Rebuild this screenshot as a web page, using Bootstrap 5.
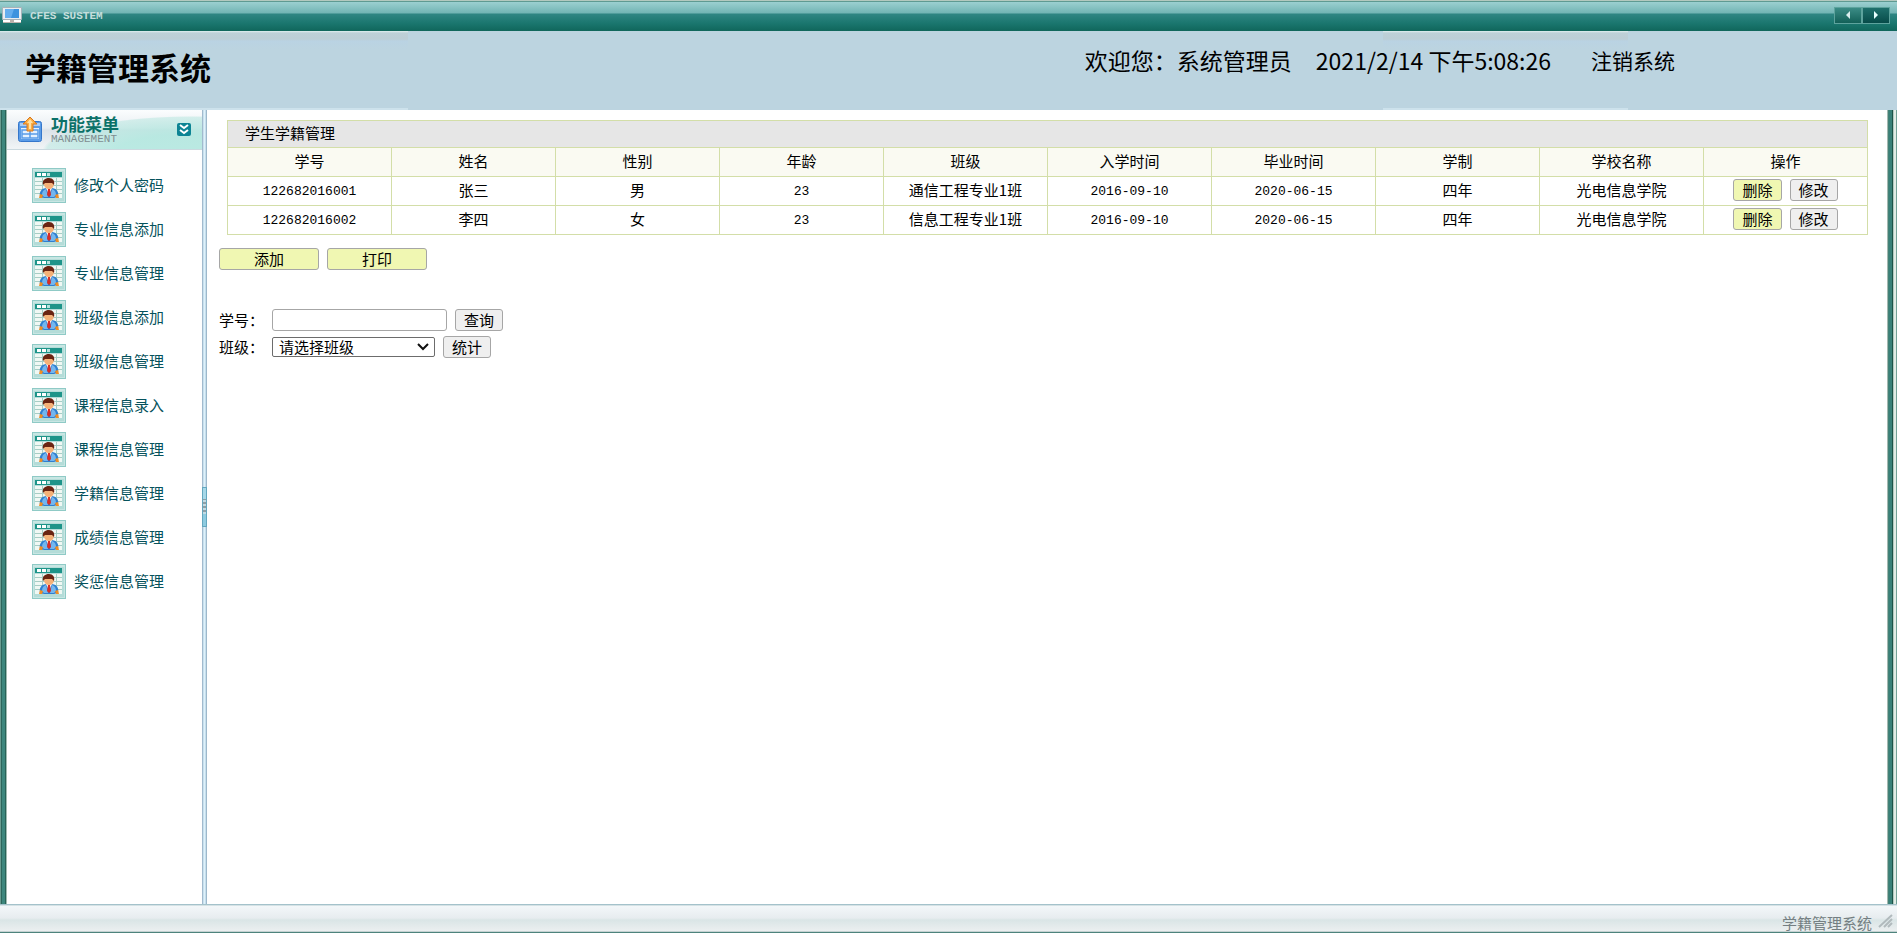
<!DOCTYPE html>
<html lang="zh-CN">
<head>
<meta charset="utf-8">
<meta name="viewport" content="width=device-width, initial-scale=1">
<title>学籍管理系统</title>
<link href="https://cdn.jsdelivr.net/npm/bootstrap@5.3.0/dist/css/bootstrap.min.css" rel="stylesheet">
<style>
body{font-family:"Noto Sans CJK SC",sans-serif;font-size:15px;line-height:20px;color:#000;background:#fff}
.titlebar{height:31px;padding:0 7px 2px 2px;border-top:1px solid #b3c9bf;box-shadow:inset 0 1px 0 #5f9a92;background:linear-gradient(#9fd2d3 0,#72b4b4 12px,#2f8583 13px,#1b776f 22px,#0e6459 31px)}
.sysname{font:700 11px/14px "Liberation Mono",monospace;color:#c5dedc;padding-top:2px}
.navbtn{width:28px;height:17px;padding:0;border:1px solid #5da39d;background:linear-gradient(#3b8c86,#136058);display:flex;align-items:center;justify-content:center}
.navbtn:last-child{background:linear-gradient(#1f706c,#074b49)}
.banner{height:79px;background:linear-gradient(#e0efef,#bdd0d7 2px,#bcced6 8px,#bad3e3 10px,#bcd4e0 18px,#bcd4e0 77px,#cde2ec 77px) 0 0/408px 79px no-repeat,linear-gradient(#e0efef,#bdd0d7 2px,#bcced6 8px,#bad3e3 10px,#bcd4e0 18px,#bcd4e0 77px,#cde2ec 77px) 1383px 0/245px 79px no-repeat,#bcd4e0;padding:0 222px 0 25px}
.sitetitle{font-size:31px;line-height:38px;font-weight:700;margin:0;padding-top:17px}
.userinfo{font-size:23px;line-height:30px;padding-top:14px;gap:24px}
.userinfo a{font-size:21px;color:#000;text-decoration:none;margin-left:16px}
.edge-l{flex:0 0 7px;background:linear-gradient(90deg,#6b9c90 0 1px,#2d665c 1px 2px,#3d877d 2px 5px,#286257 5px 6px,#9fbcb1 6px)}
.edge-r{flex:0 0 10px;background:linear-gradient(90deg,#a3b9b0 0 1px,#448177 1px 2px,#398178 2px 5px,#1d5348 5px 6px,#b1cabf 6px 7px,#e1ece6 7px 9px,#74a297 9px)}
.sidebar{flex:0 0 195px}
.side-head{height:40px;padding:0 11px 0 10px;border-bottom:1px solid #cbd9df;background:radial-gradient(ellipse 150px 36px at 185px 42px,rgba(180,232,224,.9) 0 50%,rgba(190,232,226,.6) 97%,transparent 100%),linear-gradient(#fbfdfe 0,#e9eef2 18px,#dce2e8 20px,#f0f4f6 38px)}
.side-title{font-size:17px;line-height:19px;font-weight:700;color:#0b7168}
.side-sub{font:11px/13px "Liberation Mono",monospace;color:#7f8e91}
.fold{width:14px;height:13px;padding:0;border:0;background:none;display:flex}
.menu-list{padding:18px 0 0 25px;margin:0;list-style:none;display:grid;gap:10px}
.menu-list a{display:flex;align-items:center;gap:8px;height:34px;color:#05525c;text-decoration:none}
.splitter{flex:0 0 5px;background:linear-gradient(90deg,#a1bace 0 1px,#c9e1ee 1px 2px,#dff1fa 2px 3px,#c6dfed 3px 4px,#9db8cb 4px)}
.grip{height:40px;width:5px;border:1px solid #64a7bf;background:linear-gradient(#a7d8e8 11px,transparent 11px 26px,#8ecbe0 26px),repeating-linear-gradient(#c3dbe4 0 2px,#8f9fa6 2px 4px)}
.main-pane{padding:10px 19px 0 20px}
.roster{width:100%;table-layout:fixed;border-collapse:collapse;text-align:center}
.roster th,.roster td{border:1px solid #d3dea8;padding:0 0 2px;height:29px;font-weight:400}
.roster .caption-row th{height:27px;background:#e6e6e6;text-align:left;padding-left:17px}
.roster .head-row th{background:#fafaf2}
.roster .num{font-family:"Liberation Mono",monospace;font-size:13px;padding:2px 0 0}
.ctl{height:22px;font-size:15px;line-height:18px;padding:0 8px;border:1px solid #a6a6a6;border-radius:3px;background:#efefef;color:#000}
.ctl-y{background:#f0f7b2}
.ctl-wide{width:100px}
.tools{margin:13px 0 0 -8px}
.query-area{margin:39px 0 0 -8px;display:grid;gap:5px}
.query-area label{width:53px}
.txt{width:175px;height:22px;border:1px solid #a6a6a6;border-radius:3px;padding:0 4px}
.sel{appearance:none;width:163px;height:20px;border:1px solid #6c6c6c;border-radius:2px;background:#fff url("data:image/svg+xml,%3Csvg xmlns='http://www.w3.org/2000/svg' width='12' height='8'%3E%3Cpath d='M1 1l5 5 5-5' fill='none' stroke='%23111' stroke-width='2'/%3E%3C/svg%3E") right 5px center no-repeat;color:#000;font-size:15px;line-height:18px;padding:0 20px 0 6px}
.statusbar{height:29px;border-top:1px solid #a4c2cb;border-bottom:1px solid #4d837c;box-shadow:inset 0 1px 0 #d5e2e5,inset 0 -1px 0 #c5d2d2;background:linear-gradient(#f4f8fa,#e7ecef 13px,#dae5e6 15px,#edf0f1 27px);color:#747f82;padding:8px 4px 0 0;gap:6px}
</style>
</head>
<body class="d-flex flex-column min-vh-100">
<svg class="d-none">
 <symbol id="student" viewBox="0 0 34 35">
  <path fill="#8fcac6" d="M0 0h34v35H0z"/><path fill="#c8e6e3" d="M1 1h32v33H1z"/><path fill="#b4dcd8" d="M2 3h30v30H2z"/>
  <path fill="#f0f8f4" d="M3 10h27v20H3z"/><path fill="#1d9489" d="M3 4h27v5H3z"/><path fill="#fff" d="M5 5h4v3H5zm5 0h4v3h-4z"/><path fill="#b9e2de" d="M15 5h3v3h-3z"/>
  <path stroke="#a7cdc4" d="M3 13.500h27M3 17.500h27M3 21.500h27M3 25.500h27M10.500 10v20M24.500 10v20"/>
  <path fill="#2f7fd0" d="M8 29c-1-5 1-9 7-9h4c6 0 8 4 7 9l-4 1H12z"/><path fill="#73b6ef" d="M10 27c0-3 1-5 4-6l2 8h-4zm14 0c0-3-1-5-4-6l-2 8h4z"/>
  <path fill="#fff" d="M14 20h6l-3 7z"/><path fill="#d82d26" d="M16 21h2l1 6-2 2-2-2z"/>
  <path fill="#f5b178" d="M12 15c0 4 2 6 5 6s5-2 5-6l-1-3h-8z"/><path fill="#6a2412" d="M11 17c-1-5 2-7 6-7s6 3 5 7l-2-2-7 0z"/>
  <path fill="#ef8e25" d="M8 26l3 1-1 3H7zm18 0l-3 1 1 3h3z"/>
 </symbol>
</svg>
<header>
 <div class="titlebar d-flex align-items-center justify-content-between">
  <div class="d-flex align-items-center gap-2">
   <svg width="20" height="17" viewBox="0 0 20 17"><path fill="#e9edf0" stroke="#a7b2b9" d="M.5.500h19v12H.5z"/><path fill="#3e93de" d="M3 2h14v9H3z"/><path fill="#65aeee" d="M3 2h9l-3 9H3z"/><path fill="#fff" d="M1 13h18v3H1z"/><path fill="#bbb2ac" d="M8 13h4v2H8zM1 15h18v1H1z"/></svg>
   <span class="sysname">CFES SUSTEM</span>
  </div>
  <div class="d-flex">
   <button class="navbtn" aria-label="后退"><svg width="6" height="8"><path fill="#d9eeee" d="M5 0v8L1 4z"/></svg></button>
   <button class="navbtn" aria-label="前进"><svg width="6" height="8"><path fill="#e9ffff" d="M1 0v8l4-4z"/></svg></button>
  </div>
 </div>
 <div class="banner d-flex justify-content-between">
  <h1 class="sitetitle">学籍管理系统</h1>
  <div class="userinfo d-flex"><span>欢迎您：系统管理员</span><span>2021/2/14 下午5:08:26</span><a href="#">注销系统</a></div>
 </div>
</header>
<div class="d-flex flex-grow-1">
 <div class="edge-l"></div>
 <aside class="sidebar">
  <div class="side-head d-flex align-items-center">
   <svg width="26" height="27" viewBox="0 0 26 27"><rect x="1.500" y="5.500" width="23" height="20" rx="2" fill="#5a9ce8" stroke="#3577cb"/><path fill="#a9cdf5" d="M3 7h20v3H3z"/><path fill="#e4f1ff" d="M4 12h18v11H4z"/><path stroke="#5a9ce8" stroke-width="1.500" fill="none" d="M5 18h16M13 14v8M5 14h16v8H5z"/><path fill="#f9ad43" stroke="#d9781e" d="M13 1l7 7h-4v7h-6V8H6z"/><path fill="#ffe0a2" d="M13 3l3 4h-2v6h-2V7h-2z"/></svg>
   <div class="ms-2 flex-grow-1"><div class="side-title">功能菜单</div><div class="side-sub">MANAGEMENT</div></div>
   <button class="fold" aria-label="折叠菜单"><svg width="14" height="13"><rect width="14" height="13" rx="2" fill="#0c8494"/><path d="M3 2l4 3 4-3M3 7l4 3 4-3" stroke="#fff" stroke-width="2" fill="none"/></svg></button>
  </div>
  <ul class="menu-list">
   <li><a href="#"><svg width="34" height="35"><use href="#student"/></svg>修改个人密码</a></li>
   <li><a href="#"><svg width="34" height="35"><use href="#student"/></svg>专业信息添加</a></li>
   <li><a href="#"><svg width="34" height="35"><use href="#student"/></svg>专业信息管理</a></li>
   <li><a href="#"><svg width="34" height="35"><use href="#student"/></svg>班级信息添加</a></li>
   <li><a href="#"><svg width="34" height="35"><use href="#student"/></svg>班级信息管理</a></li>
   <li><a href="#"><svg width="34" height="35"><use href="#student"/></svg>课程信息录入</a></li>
   <li><a href="#"><svg width="34" height="35"><use href="#student"/></svg>课程信息管理</a></li>
   <li><a href="#"><svg width="34" height="35"><use href="#student"/></svg>学籍信息管理</a></li>
   <li><a href="#"><svg width="34" height="35"><use href="#student"/></svg>成绩信息管理</a></li>
   <li><a href="#"><svg width="34" height="35"><use href="#student"/></svg>奖惩信息管理</a></li>
  </ul>
 </aside>
 <div class="splitter d-flex align-items-center"><div class="grip"></div></div>
 <main class="main-pane flex-grow-1">
  <table class="roster">
   <thead>
    <tr class="caption-row"><th colspan="10">学生学籍管理</th></tr>
    <tr class="head-row"><th>学号</th><th>姓名</th><th>性别</th><th>年龄</th><th>班级</th><th>入学时间</th><th>毕业时间</th><th>学制</th><th>学校名称</th><th>操作</th></tr>
   </thead>
   <tbody>
    <tr><td class="num">122682016001</td><td>张三</td><td>男</td><td class="num">23</td><td>通信工程专业1班</td><td class="num">2016-09-10</td><td class="num">2020-06-15</td><td>四年</td><td>光电信息学院</td><td><div class="d-flex justify-content-center gap-2"><button class="ctl ctl-y">删除</button><button class="ctl">修改</button></div></td></tr>
    <tr><td class="num">122682016002</td><td>李四</td><td>女</td><td class="num">23</td><td>信息工程专业1班</td><td class="num">2016-09-10</td><td class="num">2020-06-15</td><td>四年</td><td>光电信息学院</td><td><div class="d-flex justify-content-center gap-2"><button class="ctl ctl-y">删除</button><button class="ctl">修改</button></div></td></tr>
   </tbody>
  </table>
  <div class="tools d-flex gap-2"><button class="ctl ctl-y ctl-wide">添加</button><button class="ctl ctl-y ctl-wide">打印</button></div>
  <form class="query-area">
   <div class="d-flex align-items-center"><label for="sno">学号：</label><input id="sno" class="txt" type="text"><button type="button" class="ctl ms-2">查询</button></div>
   <div class="d-flex align-items-center"><label for="cls">班级：</label><select id="cls" class="sel"><option>请选择班级</option></select><button type="button" class="ctl ms-2">统计</button></div>
  </form>
 </main>
 <div class="edge-r"></div>
</div>
<footer class="statusbar d-flex justify-content-end">
 <span>学籍管理系统</span>
 <svg width="15" height="15"><path d="M1 14L14 2M6 14l8-8M10 14l4-4" stroke="#b1babd" stroke-width="2"/></svg>
</footer>
<script src="https://cdn.jsdelivr.net/npm/bootstrap@5.3.0/dist/js/bootstrap.bundle.min.js"></script>
</body>
</html>
